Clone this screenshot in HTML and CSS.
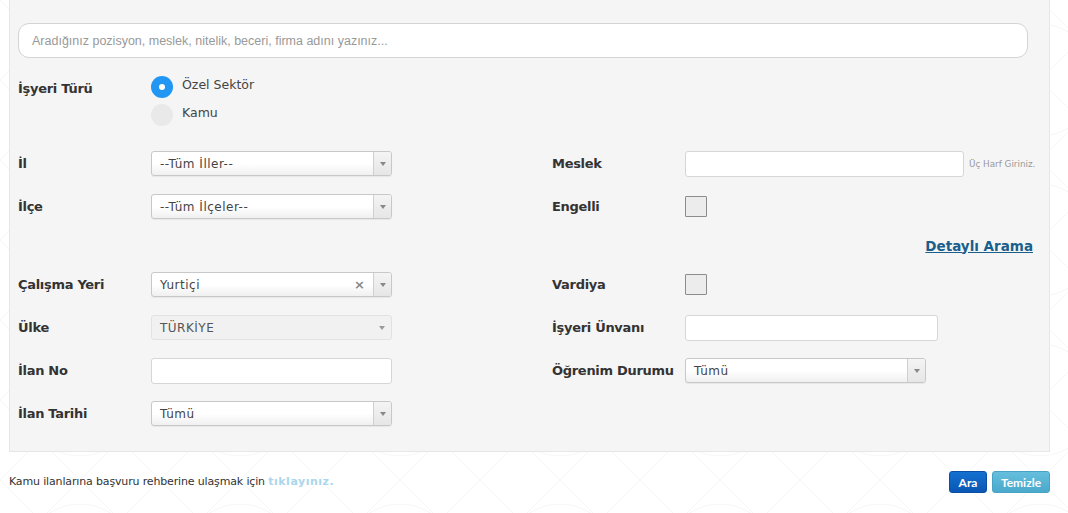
FILE: index.html
```html
<!DOCTYPE html>
<html lang="tr">
<head>
<meta charset="utf-8">
<title>İlan Arama</title>
<link rel="stylesheet" href="styles.css">
</head>
<body>
<div class="page">
  <div class="panel">
    <div class="search"><span class="placeholder">Aradığınız pozisyon, meslek, nitelik, beceri, firma adını yazınız...</span></div>

    <div class="type-row">
      <div class="label type-label">İşyeri Türü</div>
      <div class="radios">
        <div class="radio-item"><span class="radio checked"></span><span class="radio-text">Özel Sektör</span></div>
        <div class="radio-item"><span class="radio"></span><span class="radio-text">Kamu</span></div>
      </div>
    </div>

    <div class="rows">
      <div class="row">
        <div class="cell-left">
          <div class="label">İl</div>
          <div class="select"><span class="sel-text">--Tüm İller--</span><span class="sel-arrow"><i></i></span></div>
        </div>
        <div class="cell-right">
          <div class="label">Meslek</div>
          <div class="input meslek-input"></div>
          <span class="hint">Üç Harf Giriniz.</span>
        </div>
      </div>

      <div class="row">
        <div class="cell-left">
          <div class="label">İlçe</div>
          <div class="select"><span class="sel-text">--Tüm İlçeler--</span><span class="sel-arrow"><i></i></span></div>
        </div>
        <div class="cell-right">
          <div class="label">Engelli</div>
          <span class="checkbox"></span>
        </div>
      </div>

      <div class="row row-link">
        <a class="detail-link" href="#">Detaylı Arama</a>
      </div>

      <div class="row">
        <div class="cell-left">
          <div class="label">Çalışma Yeri</div>
          <div class="select"><span class="sel-text">Yurtiçi</span><span class="sel-clear">×</span><span class="sel-arrow"><i></i></span></div>
        </div>
        <div class="cell-right">
          <div class="label">Vardiya</div>
          <span class="checkbox"></span>
        </div>
      </div>

      <div class="row">
        <div class="cell-left">
          <div class="label">Ülke</div>
          <div class="select disabled"><span class="sel-text">TÜRKİYE</span><span class="sel-arrow"><i></i></span></div>
        </div>
        <div class="cell-right">
          <div class="label">İşyeri Ünvanı</div>
          <div class="input unvan-input"></div>
        </div>
      </div>

      <div class="row">
        <div class="cell-left">
          <div class="label">İlan No</div>
          <div class="input ilan-input"></div>
        </div>
        <div class="cell-right">
          <div class="label">Öğrenim Durumu</div>
          <div class="select"><span class="sel-text">Tümü</span><span class="sel-arrow"><i></i></span></div>
        </div>
      </div>

      <div class="row">
        <div class="cell-left">
          <div class="label">İlan Tarihi</div>
          <div class="select"><span class="sel-text">Tümü</span><span class="sel-arrow"><i></i></span></div>
        </div>
      </div>
    </div>
  </div>

  <div class="footer">
    <p class="note">Kamu ilanlarına başvuru rehberine ulaşmak için <a href="#" class="note-link">tıklayınız.</a></p>
    <div class="buttons">
      <button class="btn btn-primary">Ara</button>
      <button class="btn btn-info">Temizle</button>
    </div>
  </div>
</div>
</body>
</html>
```

FILE: styles.css
```css
* { box-sizing: border-box; }
html, body { margin: 0; padding: 0; }
body {
  background-color: #ffffff;
  background-image:
    url("data:image/svg+xml;utf8,<svg xmlns='http://www.w3.org/2000/svg' width='160' height='160' viewBox='0 0 160 160'><g fill='none' stroke='%23f6f6f6' stroke-width='1'><circle cx='80' cy='80' r='56'/><path d='M0 0 L160 160 M160 0 L0 160 M80 0 L160 80 L80 160 L0 80 Z'/></g></svg>");
  background-size: 160px 160px;
  font-family: "DejaVu Sans", Verdana, sans-serif;
  color: #333;
  width: 1068px;
  height: 513px;
  overflow: hidden;
}
.page { padding-left: 9px; width: 1068px; }

.panel {
  width: 1041px;
  background: #f5f5f5;
  border: 1px solid #e6e6e6;
  border-top: none;
  padding: 23px 21px 25px 8px;
}

.search {
  height: 35px;
  background: #fff;
  border: 1px solid #d4d4d4;
  border-radius: 11px;
  display: flex;
  align-items: center;
  padding-left: 13px;
}
.placeholder {
  font-family: "Liberation Sans", Arial, sans-serif;
  font-size: 12.5px;
  color: #999;
}

.label {
  width: 133px;
  flex: none;
  font-weight: bold;
  font-size: 13px;
  letter-spacing: -0.3px;
  color: #333;
}

.type-row {
  display: flex;
  align-items: flex-start;
  margin-top: 18px;
}
.type-label { margin-top: 5px; }
.radios { display: flex; flex-direction: column; gap: 6px; }
.radio-item { display: flex; align-items: center; height: 22px; }
.radio {
  width: 22px; height: 22px; border-radius: 50%;
  background: #e9e9e9;
  display: inline-block;
  position: relative;
  flex: none;
}
.radio.checked { background: #2196f3; }
.radio.checked::after {
  content: "";
  position: absolute;
  left: 8px; top: 8px;
  width: 6px; height: 6px;
  border-radius: 50%;
  background: #fff;
}
.radio-text {
  margin-left: 9px;
  font-size: 12.5px;
  color: #444;
  margin-top: -5px;
}

.rows {
  display: flex;
  flex-direction: column;
  gap: 18px;
  margin-top: 25px;
}
.row { display: flex; align-items: center; height: 25px; }
.row-link { height: 17px; justify-content: flex-end; margin-right: -5px; }
.cell-left { width: 534px; display: flex; align-items: center; flex: none; }
.cell-right { display: flex; align-items: center; flex: 1; }

.select {
  width: 241px;
  height: 25px;
  background: linear-gradient(#ffffff 0%, #ffffff 50%, #f0f0f0 100%);
  border: 1px solid #c8c8c8;
  border-radius: 3px;
  display: flex;
  align-items: center;
  position: relative;
  box-shadow: 0 1px 1px rgba(0,0,0,0.06);
}
.sel-text {
  flex: 1;
  padding-left: 8px;
  font-size: 12px;
  letter-spacing: 0.5px;
  color: #444;
}
.sel-clear {
  font-size: 13px;
  font-weight: bold;
  color: #888;
  margin-right: 8px;
  line-height: 1;
}
.sel-arrow {
  width: 18px;
  height: 100%;
  border-left: 1px solid #d0d0d0;
  background: linear-gradient(#f4f4f4, #e6e6e6);
  border-radius: 0 2px 2px 0;
  display: flex;
  align-items: center;
  justify-content: center;
}
.sel-arrow i {
  width: 0; height: 0;
  border-left: 3px solid transparent;
  border-right: 3px solid transparent;
  border-top: 4px solid #888;
  margin-top: 1px;
}
.select.disabled {
  background: #f1f1f1;
  border-color: #e2e2e2;
  box-shadow: none;
}
.select.disabled .sel-text { color: #555; }
.select.disabled .sel-arrow { border-left: none; background: transparent; }
.select.disabled .sel-arrow i { border-top-color: #999; }

.input {
  height: 26px;
  background: #fff;
  border: 1px solid #d6d6d6;
  border-radius: 3px;
}
.meslek-input { width: 279px; }
.unvan-input { width: 253px; }
.ilan-input { width: 241px; }
.hint {
  font-size: 8.8px;
  color: #999;
  margin-left: 5px;
  white-space: nowrap;
  flex: none;
}

.checkbox {
  width: 22px; height: 21px;
  border: 1px solid #8c8c8c;
  background: #ececec;
  border-radius: 1px;
  display: inline-block;
}

.detail-link {
  font-size: 13.5px;
  font-weight: bold;
  color: #1a5e8c;
  text-decoration: underline;
}

.footer {
  display: flex;
  align-items: center;
  justify-content: space-between;
  width: 1041px;
  margin-top: 17px;
}
.note {
  margin: 0;
  font-size: 11px;
  letter-spacing: -0.15px;
  color: #333;
}
.note-link {
  color: #a9d6ec;
  font-weight: bold;
  letter-spacing: 0.5px;
  text-decoration: none;
}
.buttons { display: flex; gap: 5px; margin-top: 2px; }
.btn {
  height: 22px;
  border-radius: 3px;
  font-family: "Lato", "Open Sans", sans-serif;
  font-weight: bold;
  font-size: 12px;
  color: #fff;
  padding: 0 7px;
  cursor: pointer;
}
.btn-primary {
  background: linear-gradient(#1370d0, #0a56b4);
  border: 1px solid #0a4fa3;
  width: 38px;
}
.btn-info {
  background: linear-gradient(#66bedd, #4aa9cc);
  border: 1px solid #46a3c6;
  width: 58px;
}
```
